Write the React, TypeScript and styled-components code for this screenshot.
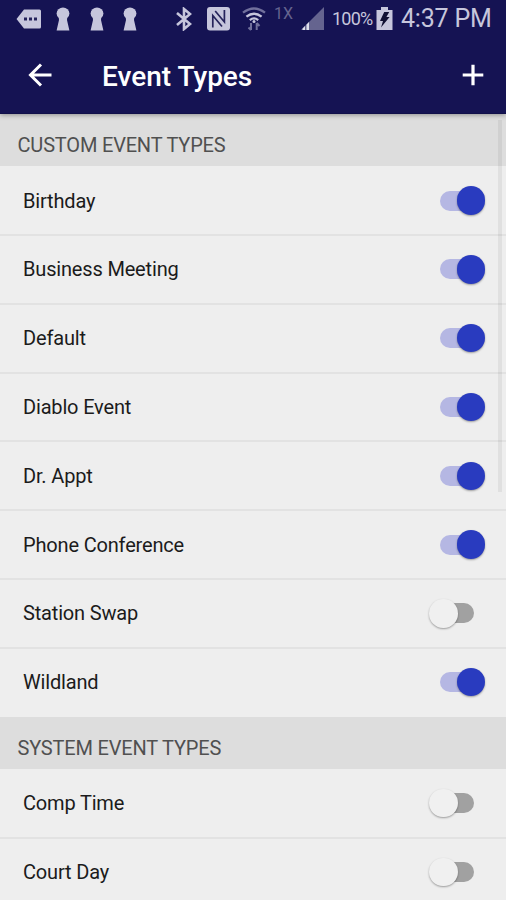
import React, { useState } from "react";
import styled, { createGlobalStyle } from "styled-components";

const GlobalStyle = createGlobalStyle`
  * { box-sizing: border-box; }
  body { margin: 0; background: #eeeeee; font-family: Roboto, "Liberation Sans", sans-serif; }
  button { border: 0; padding: 0; background: none; font: inherit; }
`;

const Screen = styled.div`
  width: 506px;
  height: 900px;
  overflow: hidden;
  display: flex;
  flex-direction: column;
  background: #eeeeee;
`;

const Header = styled.header`
  flex: none;
  height: 114px;
  background: #151353;
  border-bottom: 1px solid #11104a;
  box-shadow: 0 1px 5px rgba(0, 0, 0, 0.36);
  position: relative;
  z-index: 2;
`;

const StatusBar = styled.div`
  height: 38px;
  display: flex;
  align-items: center;
  color: #c6c6dc;
`;

const StatusIcon = styled.svg<{ $gap: number }>`
  flex: none;
  display: block;
  margin-left: ${(p) => p.$gap}px;
`;

const StatusText = styled.span<{ $gap: number; $size: number; $width: number; $dim?: boolean; $track?: number }>`
  flex: none;
  margin-left: ${(p) => p.$gap}px;
  width: ${(p) => p.$width}px;
  font-size: ${(p) => p.$size}px;
  line-height: 42px;
  letter-spacing: ${(p) => p.$track ?? 0}px;
  white-space: nowrap;
  color: ${(p) => (p.$dim ? "#65648f" : "#c6c6dc")};
`;

const Network = styled(StatusText)`
  line-height: 28px;
  height: 38px;
`;

const TitleBar = styled.div`
  height: 74px;
  display: flex;
  align-items: center;
  padding: 0 19px 0 26px;
`;

const IconButton = styled.button`
  width: 28px;
  height: 28px;
  display: grid;
  place-items: center;
`;

const Title = styled.h1`
  margin: 3px auto 0 48px;
  font-size: 28px;
  font-weight: 500;
  line-height: 36px;
  color: #ffffff;
`;

const List = styled.main`
  flex: 1;
  position: relative;
`;

const SectionTitle = styled.h2`
  margin: 0;
  height: 52.2px;
  padding: 10px 17.5px 0;
  display: flex;
  align-items: center;
  background: #dddddd;
  color: #505050;
  font-size: 20px;
  font-weight: 400;
  line-height: 24px;
  letter-spacing: -0.18px;
`;

const Row = styled.label`
  height: 68.8px;
  padding: 0 21px 0 23px;
  display: flex;
  align-items: center;
  justify-content: space-between;
  color: #1b1b1b;
  font-size: 20px;
  letter-spacing: -0.17px;
  border: 0 solid #e2e2e2;
  border-width: 1px 0;

  &:last-child {
    border-bottom-color: transparent;
  }

  h2 + & {
    border-top-color: transparent;
  }
`;

const Switch = styled.button<{ $on: boolean }>`
  width: 56px;
  height: 29px;
  display: flex;
  align-items: center;
  justify-content: ${(p) => (p.$on ? "flex-end" : "flex-start")};
  position: relative;

  &::before {
    content: "";
    position: absolute;
    left: 11px;
    top: 4.5px;
    width: 34px;
    height: 20px;
    border-radius: 10px;
    background: ${(p) => (p.$on ? "#b5b7e3" : "#a1a1a1")};
  }
`;

const Thumb = styled.span<{ $on: boolean }>`
  width: 28.5px;
  height: 28.5px;
  border-radius: 50%;
  position: relative;
  background: ${(p) => (p.$on ? "#293bbf" : "#f0f0f0")};
  box-shadow: 0 1px 2px rgba(0, 0, 0, 0.35);
`;

const ScrollThumb = styled.div`
  position: absolute;
  top: 6px;
  right: 4px;
  width: 4px;
  height: 372px;
  background: rgba(0, 0, 0, 0.06);
`;

const Keyhole = ({ gap }: { gap: number }) => (
  <StatusIcon $gap={gap} width="14" height="24" viewBox="0 0 14 24" fill="currentColor">
    <ellipse cx="7" cy="6.4" rx="6.4" ry="5.8" />
    <path d="M2.6 9h8.8l-.4 4 2.4 10.4H.6L3 13Z" />
  </StatusIcon>
);

const Status = () => (
  <StatusBar>
    <StatusIcon $gap={16} width="26" height="20" viewBox="0 0 26 20" fill="currentColor">
      <path d="M8 .5h15.5a1.5 1.5 0 0 1 1.5 1.5v16a1.5 1.5 0 0 1-1.5 1.5H8L.5 10Z" />
      <path fill="#25235b" d="M8 8.6h3v2.8H8zM13 8.6h3v2.8h-3zM18 8.6h3v2.8h-3z" />
    </StatusIcon>
    <Keyhole gap={14} />
    <Keyhole gap={20} />
    <Keyhole gap={19} />
    <StatusIcon $gap={39} width="16" height="24" viewBox="0 0 16 24" fill="none" stroke="currentColor" strokeWidth="2.6">
      <path d="m1 6 13 11-6 5V2l6 5L1 18" />
    </StatusIcon>
    <StatusIcon $gap={15} width="23" height="24" viewBox="0 0 23 24">
      <rect width="23" height="23.5" rx="3" fill="currentColor" />
      <path d="M5.8 20.5V8.5L15 19.5M17.4 3V15L8.2 4" fill="none" stroke="#25235b" strokeWidth="1.7" />
    </StatusIcon>
    <StatusIcon $gap={12} width="24" height="24" viewBox="0 0 24 24" fill="none" strokeWidth="2.3">
      <path d="M1 5.7q11-8.5 22 0" stroke="#71709c" />
      <path d="M4.4 9.6q7.6-5.8 15.2 0M7.8 13.1q4.2-3.4 8.4 0" stroke="currentColor" />
      <circle cx="12" cy="14.6" r="1.5" fill="currentColor" />
      <path d="M9 23v-7M6.5 20.5 9 23M14.7 16v7M14.7 16l2.8 3" stroke="#71709c" strokeWidth="2" />
    </StatusIcon>
    <Network $gap={8} $size={16} $width={20} $dim>1X</Network>
    <StatusIcon $gap={7} width="24" height="24" viewBox="0 0 24 24">
      <path d="M23 0v23H0Z" fill="#65648f" />
      <path d="M1.5 21.5 4 19v4H1.5ZM5.5 17.5 8 15v8H5.5Z" fill="#dedeec" />
    </StatusIcon>
    <StatusText $gap={7} $size={18} $width={44} $track={-0.8}>100%</StatusText>
    <StatusIcon $gap={0} width="17" height="24" viewBox="0 0 17 24">
      <path d="M5 0h7v3h4.5v20H.5V3H5Z" fill="currentColor" />
      <path d="M8.2 5h5l-2.8 5h3.2L5 20.5l2-6.5H4Z" fill="#101033" />
    </StatusIcon>
    <StatusText $gap={8} $size={25} $width={94} $track={-0.2}>4:37 PM</StatusText>
  </StatusBar>
);

type EventType = { name: string; enabled: boolean };

const customTypes: EventType[] = [
  { name: "Birthday", enabled: true },
  { name: "Business Meeting", enabled: true },
  { name: "Default", enabled: true },
  { name: "Diablo Event", enabled: true },
  { name: "Dr. Appt", enabled: true },
  { name: "Phone Conference", enabled: true },
  { name: "Station Swap", enabled: false },
  { name: "Wildland", enabled: true },
];

const systemTypes: EventType[] = [
  { name: "Comp Time", enabled: false },
  { name: "Court Day", enabled: false },
];

const EventRow = ({ name, enabled }: EventType) => {
  const [on, setOn] = useState(enabled);
  return (
    <Row>
      {name}
      <Switch type="button" role="switch" aria-checked={on} aria-label={name} $on={on} onClick={() => setOn(!on)}>
        <Thumb $on={on} />
      </Switch>
    </Row>
  );
};

const Section = ({ title, items }: { title: string; items: EventType[] }) => (
  <section>
    <SectionTitle>{title}</SectionTitle>
    {items.map((item) => (
      <EventRow key={item.name} {...item} />
    ))}
  </section>
);

export default function App() {
  return (
    <>
      <GlobalStyle />
      <Screen>
        <Header>
          <Status />
          <TitleBar>
            <IconButton aria-label="Back">
              <svg width="24" height="24" viewBox="0 0 24 24" fill="none" stroke="#fff" strokeWidth="3">
                <path d="M23.5 12H3M13 1.5 2.5 12 13 22.5" />
              </svg>
            </IconButton>
            <Title>Event Types</Title>
            <IconButton aria-label="Add event type">
              <svg width="22" height="22" viewBox="0 0 22 22" fill="none" stroke="#fff" strokeWidth="3.2">
                <path d="M11 .7v20.6M.7 11h20.6" />
              </svg>
            </IconButton>
          </TitleBar>
        </Header>
        <List>
          <Section title="CUSTOM EVENT TYPES" items={customTypes} />
          <Section title="SYSTEM EVENT TYPES" items={systemTypes} />
          <ScrollThumb />
        </List>
      </Screen>
    </>
  );
}
